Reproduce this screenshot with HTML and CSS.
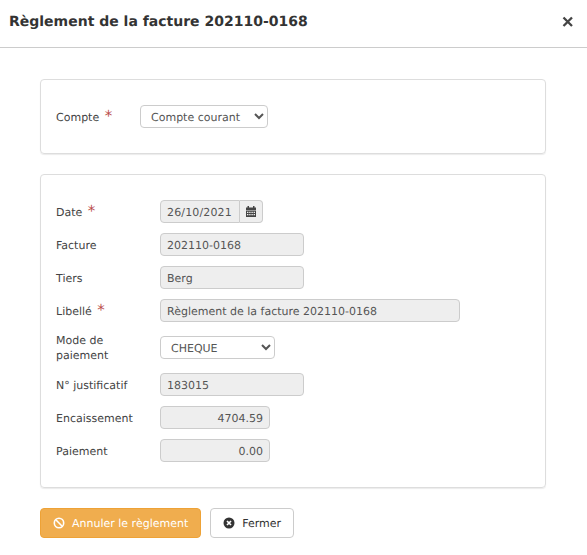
FILE: index.html
```html
<!DOCTYPE html>
<html lang="fr">
<head>
  <meta charset="UTF-8" />
  <title>Règlement de la facture 202110-0168</title>
  <link rel="stylesheet" href="styles.css">
</head>
<body>
  <div class="modal-header">
    <h4 class="modal-title">Règlement de la facture 202110-0168</h4>
    <svg class="close-icon" viewBox="0 0 12 12" width="12" height="12"><path d="M1.500 1.500l8.500 8.500M10 1.500l-8.500 8.500" stroke="#444" stroke-width="2.300" fill="none"/></svg>
  </div>

  <div class="modal-body">
    <div class="panel panel-compte">
      <div class="form-row">
        <label class="form-label">Compte <span class="required">*</span></label>
        <select class="form-select select-compte">
          <option>Compte courant</option>
        </select>
      </div>
    </div>

    <div class="panel panel-reglement">
      <div class="form-row">
        <label class="form-label">Date <span class="required">*</span></label>
        <div class="input-group">
          <input class="form-input input-date" type="text" value="26/10/2021" readonly>
          <span class="input-addon">
            <svg viewBox="0 0 10 11" width="10" height="11"><path fill="#444" fill-rule="evenodd" d="M0 1.500h1.500V0h1.500v1.500h4V0h1.500v1.500H10V4H0zM0 4.500h10V11H0zM1 5.700v1.300h1.400V5.700zM3.200 5.700v1.300h1.400V5.700zM5.400 5.700v1.300h1.400V5.700zM7.600 5.700v1.300h1.400V5.700zM1 8v1.300h1.400V8zM3.200 8v1.300h1.400V8zM5.400 8v1.300h1.400V8zM7.600 8v1.300h1.400V8z"/></svg>
          </span>
        </div>
      </div>
      <div class="form-row">
        <label class="form-label">Facture</label>
        <input class="form-input input-medium" type="text" value="202110-0168" readonly>
      </div>
      <div class="form-row">
        <label class="form-label">Tiers</label>
        <input class="form-input input-medium" type="text" value="Berg" readonly>
      </div>
      <div class="form-row">
        <label class="form-label">Libellé <span class="required">*</span></label>
        <input class="form-input input-large" type="text" value="Règlement de la facture 202110-0168" readonly>
      </div>
      <div class="form-row">
        <label class="form-label">Mode de paiement</label>
        <select class="form-select select-mode">
          <option>CHEQUE</option>
        </select>
      </div>
      <div class="form-row">
        <label class="form-label">N° justificatif</label>
        <input class="form-input input-medium" type="text" value="183015" readonly>
      </div>
      <div class="form-row">
        <label class="form-label">Encaissement</label>
        <input class="form-input input-amount" type="text" value="4704.59" readonly>
      </div>
      <div class="form-row">
        <label class="form-label">Paiement</label>
        <input class="form-input input-amount" type="text" value="0.00" readonly>
      </div>
    </div>

    <div class="actions">
      <button class="btn btn-warning" type="button">
        <svg viewBox="0 0 12 12" width="12" height="12"><circle cx="6" cy="6" r="4.700" fill="none" stroke="#fff" stroke-width="1.600"/><path d="M2.800 2.800l6.400 6.400" stroke="#fff" stroke-width="1.600"/></svg>
        Annuler le règlement
      </button>
      <button class="btn btn-default" type="button">
        <svg viewBox="0 0 12 12" width="12" height="12"><circle cx="6" cy="6" r="5.500" fill="#333"/><path d="M4 4l4 4M8 4l-4 4" stroke="#fff" stroke-width="1.700"/></svg>
        Fermer
      </button>
    </div>
  </div>
</body>
</html>
```

FILE: styles.css
```css
* {
  box-sizing: border-box;
}

html, body {
  margin: 0;
  padding: 0;
  background: #fff;
  font-family: "DejaVu Sans", sans-serif;
  font-size: 11px;
  color: #444;
  text-rendering: geometricPrecision;
}

.modal-header {
  display: flex;
  align-items: center;
  justify-content: space-between;
  height: 48px;
  padding: 0 13px 4px 9px;
  border-bottom: 1px solid #ccc;
}

.modal-title {
  margin: 0;
  font-size: 14px;
  font-weight: bold;
  color: #333;
}

.close-icon {
  display: block;
}

.modal-body {
  padding: 31px 41px 0 40px;
}

.panel {
  display: flex;
  flex-direction: column;
  gap: 10px;
  padding: 25px 15px;
  border: 1px solid #ddd;
  border-radius: 4px;
  box-shadow: 0 1px 1px rgba(0, 0, 0, 0.08);
}

.panel-compte .form-label {
  width: 84px;
}

.panel-reglement {
  margin-top: 20px;
}

.form-row {
  display: flex;
  align-items: center;
}

.form-label {
  flex: none;
  width: 104px;
  padding: 1px 20px 0 0;
  line-height: 15px;
  color: #444;
}

.required {
  margin-left: 2px;
  font-size: 15px;
  line-height: 10px;
  color: #b94a48;
}

.form-input,
.form-select {
  height: 23px;
  padding: 0 6px;
  border: 1px solid #ccc;
  border-radius: 4px;
  font-family: inherit;
  font-size: 11px;
  color: #555;
  text-rendering: geometricPrecision;
}

.form-input {
  padding-top: 2px;
  background: #eee;
  outline: none;
}

.form-select {
  padding-top: 1px;
  background: #fff;
}

.select-compte {
  width: 128px;
}

.select-mode {
  width: 115px;
}

.input-medium {
  width: 144px;
}

.input-large {
  width: 300px;
}

.input-amount {
  width: 110px;
  text-align: right;
}

.input-group {
  display: flex;
}

.input-date {
  width: 80px;
  border-radius: 4px 0 0 4px;
  letter-spacing: 0.15px;
}

.input-addon {
  display: flex;
  align-items: center;
  justify-content: center;
  width: 23px;
  height: 23px;
  border: 1px solid #ccc;
  border-left: none;
  border-radius: 0 4px 4px 0;
  background: #eee;
}

.actions {
  display: flex;
  gap: 9px;
  margin-top: 20px;
}

.btn {
  display: flex;
  align-items: center;
  gap: 7px;
  height: 30px;
  padding: 0 12px;
  border: 1px solid #ccc;
  border-radius: 4px;
  font-family: inherit;
  font-size: 11px;
  text-rendering: geometricPrecision;
}

.btn-warning {
  background: #f0ad4e;
  border-color: #eea236;
  color: #fff;
}

.btn-default {
  background: #fff;
  color: #333;
}
```
